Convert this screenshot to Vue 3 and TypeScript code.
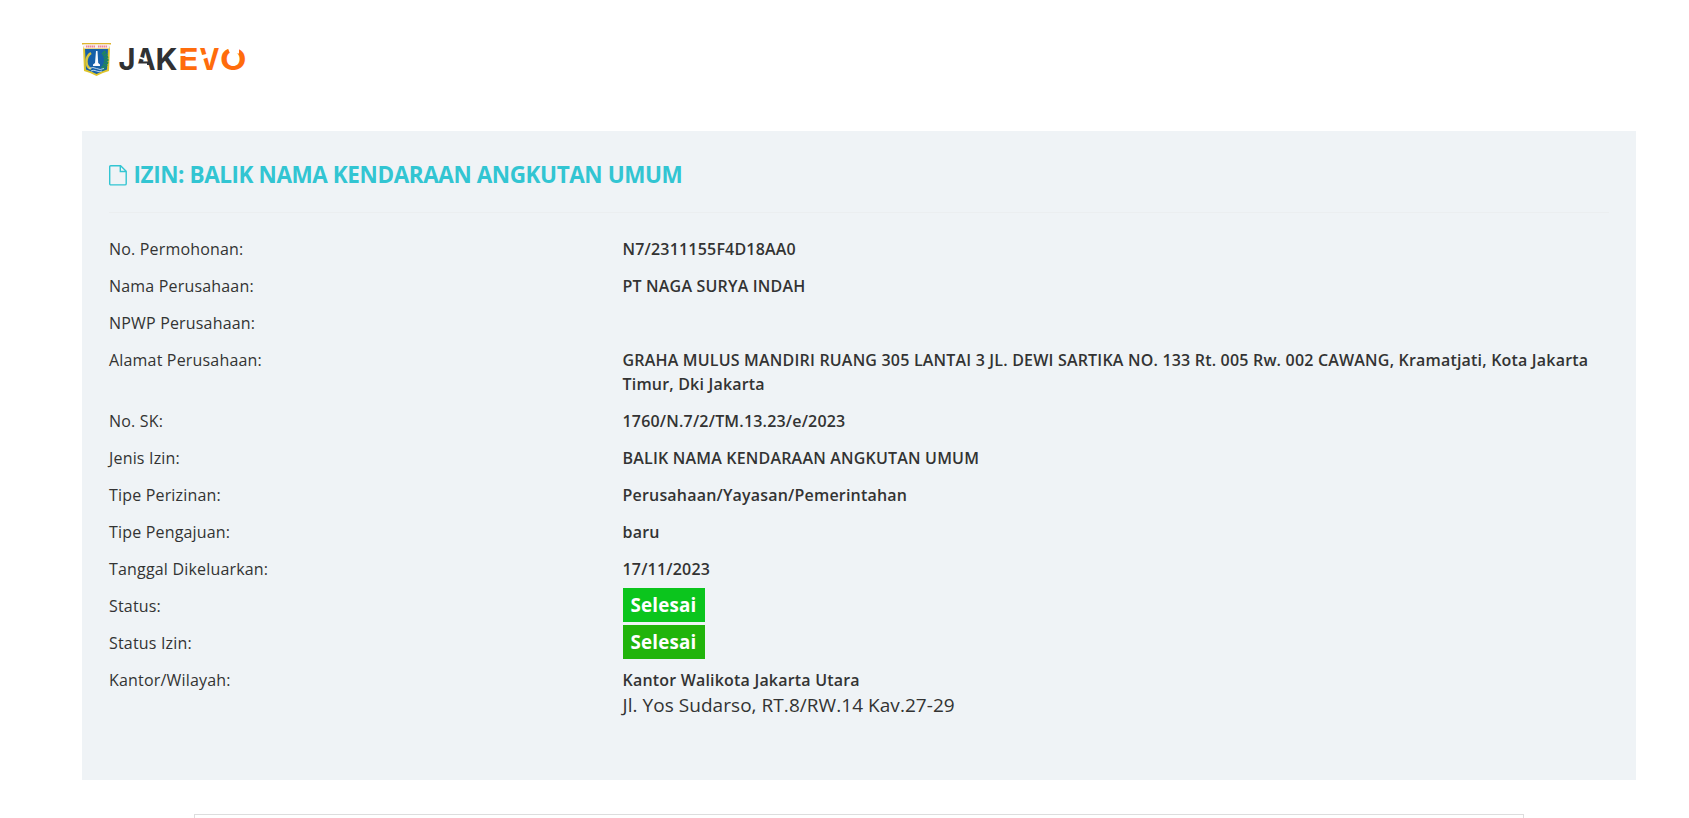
<script setup lang="ts">
interface Row {
  label: string
  value?: string
  note?: string
  badge?: 'bright' | 'deep'
}

const rows: Row[] = [
  { label: 'No. Permohonan:', value: 'N7/2311155F4D18AA0' },
  { label: 'Nama Perusahaan:', value: 'PT NAGA SURYA INDAH' },
  { label: 'NPWP Perusahaan:' },
  {
    label: 'Alamat Perusahaan:',
    value:
      'GRAHA MULUS MANDIRI RUANG 305 LANTAI 3 JL. DEWI SARTIKA NO. 133 Rt. 005 Rw. 002 CAWANG, Kramatjati, Kota Jakarta Timur, Dki Jakarta',
  },
  { label: 'No. SK:', value: '1760/N.7/2/TM.13.23/e/2023' },
  { label: 'Jenis Izin:', value: 'BALIK NAMA KENDARAAN ANGKUTAN UMUM' },
  { label: 'Tipe Perizinan:', value: 'Perusahaan/Yayasan/Pemerintahan' },
  { label: 'Tipe Pengajuan:', value: 'baru' },
  { label: 'Tanggal Dikeluarkan:', value: '17/11/2023' },
  { label: 'Status:', value: 'Selesai', badge: 'bright' },
  { label: 'Status Izin:', value: 'Selesai', badge: 'deep' },
  { label: 'Kantor/Wilayah:', value: 'Kantor Walikota Jakarta Utara', note: 'Jl. Yos Sudarso, RT.8/RW.14 Kav.27-29' },
]
</script>

<template>
  <div class="page">
    <header class="brand">
      <svg class="crest" width="29" height="34" viewBox="0 0 29 34">
        <path d="M1 3.5H28L27 28Q21 29.5 14.500 33Q8 29.500 2 28Z" fill="#dfc52c" />
        <path d="M3 6H26L25 26.500Q20 28 14.500 31Q9 28 4 26.500Z" fill="#1660a8" />
        <rect x="0" y="0" width="29" height="1.500" fill="#dfb52e" />
        <rect x="1.500" y="1.500" width="26" height="4" fill="#faeeee" />
        <path d="M4 3.500H13M16 3.500H25" stroke="#ed8997" stroke-width="1.800" stroke-dasharray="1.500 .5" />
        <path d="M9 10C3 14 3 23 9 26" fill="none" stroke="#d9c63d" stroke-width="2.400" />
        <path d="M21 9C26 14 25 22 20 26" fill="none" stroke="#22875b" stroke-width="4.600" stroke-dasharray="2 .6" />
        <path d="M14 8H15.500L16.200 20L18 21.500V23H11V21.500L13 20Z" fill="#f7faff" />
        <path d="M7 25.500Q11 23.500 14.500 25.500T22 25.500M9 28Q12 26.500 14.500 28T20 28" fill="none" stroke="#b9d4ea" stroke-width="1" />
      </svg>
      <svg class="wordmark" width="134" height="50" viewBox="0 -8 134 50">
        <g class="letters">
          <text x="1.500" y="28" textLength="17" lengthAdjust="spacingAndGlyphs">J</text>
          <text x="18.500" y="28" textLength="20" lengthAdjust="spacingAndGlyphs">A</text>
          <text x="38.500" y="28" textLength="22" lengthAdjust="spacingAndGlyphs">K</text>
          <g class="accent">
            <text x="61.500" y="28" textLength="20" lengthAdjust="spacingAndGlyphs">E</text>
            <text x="82.500" y="28" textLength="20" lengthAdjust="spacingAndGlyphs">V</text>
            <text x="103" y="28" textLength="26.500" lengthAdjust="spacingAndGlyphs">O</text>
          </g>
        </g>
        <g class="cuts">
          <path d="M17 21.500H30V29H17Z" />
          <path d="M20 13.500L28 16.500V18.200L20 15.800Z" />
          <path d="M62 11.500H69V14H62Z" />
          <path d="M83 13.500L91.500 11.500L92.500 15L83 18Z" />
          <path d="M110 4H122V11.500H113Z" />
        </g>
      </svg>
    </header>

    <main class="panel">
      <h1 class="title">
        <svg class="file" width="18" height="21" viewBox="0 0 18 21">
          <path d="M1.700 .7H11.600L17.200 6.200V18.700Q17.200 19.900 16 19.900H1.900Q.7 19.900 .7 18.700V1.700Q.7 .7 1.700 .7ZM11.300 .9V6.500H17" />
        </svg>
        <span>IZIN: BALIK NAMA KENDARAAN ANGKUTAN UMUM</span>
      </h1>
      <dl class="details">
        <div v-for="row in rows" :key="row.label" class="row">
          <dt>{{ row.label }}</dt>
          <dd>
            <span v-if="row.badge" class="badge" :class="row.badge">{{ row.value }}</span>
            <template v-else>{{ row.value }}</template>
            <div v-if="row.note" class="note">{{ row.note }}</div>
          </dd>
        </div>
      </dl>
    </main>

    <section class="frame"></section>
  </div>
</template>

<style>
body {
  background: #fff;
  overflow: hidden;
}
</style>

<style scoped>
.page {
  box-sizing: border-box;
  height: 818px;
  overflow: hidden;
  padding: 0 53px 0 82px;
  font-family: 'Open Sans', sans-serif;
  font-size: 16px;
  line-height: 24px;
  color: #333;
}
.brand {
  display: flex;
  box-sizing: border-box;
  height: 131px;
  padding-top: 42px;
  gap: 6px;
}
.crest {
  margin-top: 1px;
}
.wordmark {
  margin-top: -8px;
}
.letters {
  font-family: Inter, sans-serif;
  font-size: 29.5px;
  font-weight: 700;
  fill: #303133;
}
.letters .accent {
  fill: #ff6c0c;
}
.cuts {
  fill: #fff;
}
.panel {
  box-sizing: border-box;
  height: 649px;
  padding: 27px;
  background: #eff3f6;
}
.title {
  display: flex;
  box-sizing: border-box;
  height: 55px;
  margin: 0;
  padding-top: 2px;
  gap: 6.5px;
  border-bottom: 1px solid #ebeef0;
  color: #32c5d2;
  font-size: 22.5px;
  font-weight: 700;
  letter-spacing: -0.42px;
  line-height: 30px;
}
.file {
  margin-top: 5px;
  fill: none;
  stroke: currentColor;
  stroke-width: 1.400;
}
.details {
  margin: 24px 0 0;
}
.row {
  display: grid;
  grid-template-columns: 513.5px 1fr;
  margin-bottom: 13px;
}
dt,
dd {
  margin: 0;
  letter-spacing: 0.18px;
}
dd {
  font-weight: 600;
  letter-spacing: 0.192px;
}
.badge {
  display: block;
  box-sizing: border-box;
  width: 82px;
  height: 34px;
  margin: -6px 0 -4px;
  padding: 0 8px;
  color: #fff;
  font-size: 18.8px;
  font-weight: 700;
  line-height: 34px;
}
.bright {
  background: #0bc51d;
}
.deep {
  background: #21b40b;
}
.note {
  font-size: 19px;
  font-weight: 400;
  letter-spacing: 0.05px;
  line-height: 27px;
}
.frame {
  box-sizing: border-box;
  height: 300px;
  margin: 34px 112px 0;
  border: 1px solid #ddd;
}
</style>
